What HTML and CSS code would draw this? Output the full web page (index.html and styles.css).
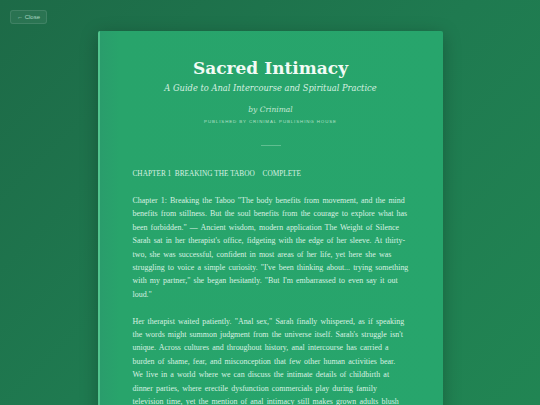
FILE: index.html
```html
<!DOCTYPE html>
<html lang="en">
    <head>
        <meta charset="UTF-8" />
        <meta name="viewport" content="width=device-width, initial-scale=1.0" />
        <title>Sacred Intimacy</title>
        <link rel="stylesheet" href="styles.css">
    </head>
    <body>
        <button class="close-btn">&larr; Close</button>
        <div class="reader">
            <div class="book">
                <div class="book-head">
                    <h1 class="title">Sacred Intimacy</h1>
                    <p class="subtitle">A Guide to Anal Intercourse and Spiritual Practice</p>
                    <p class="author">by Crinimal</p>
                    <p class="publisher">Published by Crinimal Publishing House</p>
                    <div class="divider"></div>
                </div>

                <!-- chapter -->
                <div class="chapter">
                    <h3 class="chapter-title">Chapter 1 &nbsp;Breaking the Taboo <span class="status">Complete</span></h3>
                    <p>Chapter 1: Breaking the Taboo "The body benefits from movement, and the mind benefits from stillness. But the soul benefits from the courage to explore what has been forbidden." — Ancient wisdom, modern application The Weight of Silence Sarah sat in her therapist's office, fidgeting with the edge of her sleeve. At thirty-two, she was successful, confident in most areas of her life, yet here she was struggling to voice a simple curiosity. "I've been thinking about... trying something with my partner," she began hesitantly. "But I'm embarrassed to even say it out loud."</p>
                    <p>Her therapist waited patiently. "Anal sex," Sarah finally whispered, as if speaking the words might summon judgment from the universe itself. Sarah's struggle isn't unique. Across cultures and throughout history, anal intercourse has carried a burden of shame, fear, and misconception that few other human activities bear. We live in a world where we can discuss the intimate details of childbirth at dinner parties, where erectile dysfunction commercials play during family television time, yet the mention of anal intimacy still makes grown adults blush uncomfortably.</p>
                </div>
            </div>
        </div>
    </body>
</html>
```

FILE: styles.css
```css
html, body {
    height: 100%;
}
body {
    margin: 0;
    overflow: hidden;
    font-family: "Liberation Serif", serif;
    background: linear-gradient(135deg, #1d6a47 0%, #1f7a50 50%, #218553 100%);
}
.close-btn {
    position: absolute;
    top: 10px;
    left: 10px;
    padding: 3px 6px;
    font-family: "Liberation Sans", sans-serif;
    font-size: 6px;
    color: rgba(220, 245, 230, 0.75);
    background: rgba(255, 255, 255, 0.06);
    border: 1px solid rgba(255, 255, 255, 0.1);
    border-radius: 3px;
}
.reader {
    padding-top: 31px;
    display: flex;
    justify-content: center;
}
.book {
    width: 276px;
    padding: 0 34px 0 33px;
    min-height: 500px;
    background: linear-gradient(90deg, #2a9d6c 0px, #28a46b 20px, #27a56c 100%);
    border-left: 2px solid #52c48e;
    border-radius: 2px;
    box-shadow: 0 4px 18px rgba(0, 0, 0, 0.25);
    color: #d8f1e2;
}
.book-head {
    text-align: center;
    padding-top: 26px;
}
.title {
    margin: 0;
    font-family: "DejaVu Serif", serif;
    font-size: 17px;
    line-height: 22px;
    color: #f2fbf5;
}
.subtitle {
    margin: 2px 0 0;
    font-family: "DejaVu Serif", serif;
    font-style: italic;
    font-size: 8.3px;
    line-height: 14px;
    color: #d6f0e0;
}
.author {
    margin: 9px 0 0;
    font-family: "DejaVu Serif", serif;
    font-style: italic;
    font-size: 7.5px;
    line-height: 12px;
    color: #c8ead6;
}
.publisher {
    margin: 3px 0 0;
    font-family: "Liberation Sans", sans-serif;
    font-size: 4.4px;
    letter-spacing: 0.9px;
    text-transform: uppercase;
    color: #b7e0c8;
}
.divider {
    width: 20px;
    height: 1px;
    margin: 21px auto 0;
    background: rgba(200, 240, 215, 0.35);
}
.chapter {
    padding-top: 22px;
}
.chapter-title {
    margin: 0 0 14px;
    font-weight: normal;
    font-size: 7.3px;
    line-height: 12px;
    text-transform: uppercase;
    color: #d8f1e2;
}
.status {
    margin-left: 6px;
}
.chapter p {
    margin: 0 0 13.4px;
    font-size: 7.95px;
    word-spacing: 1.15px;
    line-height: 13.4px;
}
```
